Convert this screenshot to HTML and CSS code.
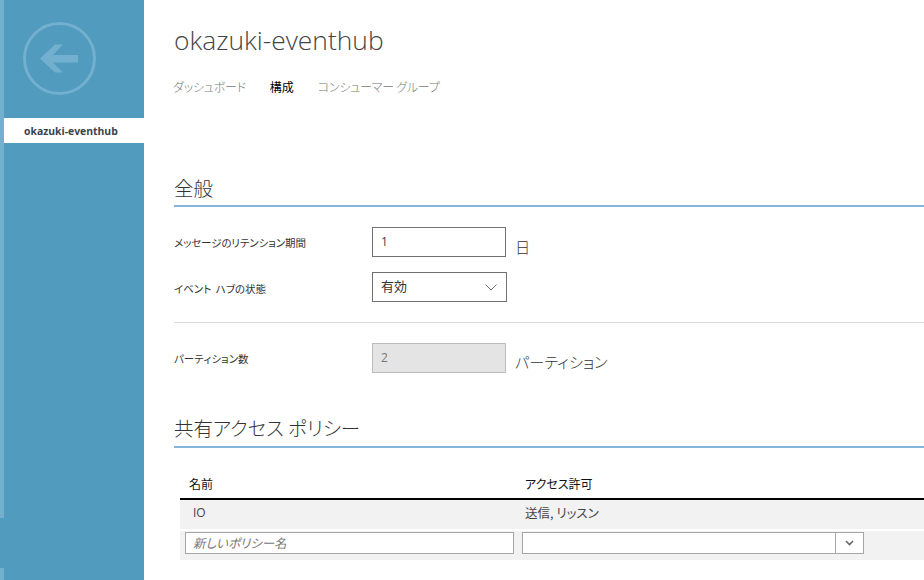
FILE: index.html
```html
<!DOCTYPE html>
<html lang="ja">
<head>
<meta charset="utf-8">
<title>okazuki-eventhub</title>
<link rel="stylesheet" href="styles.css">
</head>
<body>
<div class="app">
  <aside class="side">
    <div class="strip"></div>
    <div class="side-main">
      <div class="back">
        <svg class="back-icon" width="74" height="74" viewBox="0 0 74 74" fill="none">
          <circle cx="36.5" cy="36.5" r="35" stroke="#73afcf" stroke-width="3"/>
          <path d="M17 36.500 32 22.500H40L30 33H55V40.500H30L40 50.500H32Z" fill="#73afcf"/>
        </svg>
      </div>
      <div class="side-item">okazuki-eventhub</div>
    </div>
  </aside>
  <main class="main">
    <h1 class="title">okazuki-eventhub</h1>
    <nav class="tabs">
      <span class="tab">ダッシュボード</span>
      <span class="tab active">構成</span>
      <span class="tab">コンシューマー グループ</span>
    </nav>
    <h2 class="section first">全般</h2>
    <div class="row r1">
      <label class="lbl">メッセージのリテンション期間</label>
      <div class="input">1</div>
      <span class="unit day">日</span>
    </div>
    <div class="row r2">
      <label class="lbl">イベント ハブの状態</label>
      <div class="select"><span class="select-value">有効</span>
        <svg class="chev" width="12" height="7" viewBox="0 0 12 7" fill="none"><path d="M.5.5 6 6 11.500.5" stroke="#6d6d6d"/></svg>
      </div>
    </div>
    <hr class="rule">
    <div class="row r3">
      <label class="lbl">パーティション数</label>
      <div class="input disabled">2</div>
      <span class="unit">パーティション</span>
    </div>
    <h2 class="section second">共有アクセス ポリシー</h2>
    <div class="table">
      <div class="thead">
        <span class="col-a">名前</span>
        <span class="col-b">アクセス許可</span>
      </div>
      <div class="tr">
        <span class="cell-a">IO</span>
        <span class="cell-b">送信, リッスン</span>
      </div>
      <div class="tr-new">
        <div class="new-name">新しいポリシー名</div>
        <div class="combo">
          <div class="combo-btn">
            <svg width="9" height="6" viewBox="0 0 9 6" fill="none"><path d="M1 1 4.500 4.500 8 1" stroke="#666" stroke-width="1.600"/></svg>
          </div>
        </div>
      </div>
    </div>
  </main>
</div>
</body>
</html>
```
FILE: styles.css
```css
* { box-sizing: border-box; }
html, body { margin: 0; height: 100%; overflow: hidden; background: #fff; }
body { font-family: "Noto Sans CJK JP", "Open Sans", sans-serif; color: #333; font-feature-settings: "palt"; }
.app { display: flex; width: 924px; height: 580px; overflow: hidden; }

.side { width: 144px; flex: none; display: flex; background: #519bbe; }
.strip { width: 4px; height: 518px; background: #73afcf; flex: none; }
.side-main { flex: 1; position: relative; }
.side-main::before { content: ""; position: absolute; left: -4px; top: 568px; width: 4px; height: 12px; background: #73afcf; }
.back { height: 118px; padding: 22px 0 0 19px; }
.back-icon { display: block; }
.side-item { height: 25px; background: #fff; color: #3c4350; font: 700 10.4px/26px "Open Sans", sans-serif; padding-left: 20px; }

.main { flex: 1; min-width: 0; padding-left: 30px; }
.title { margin: 0; padding-top: 22px; height: 60px; font: 300 26.4px/36px "Open Sans", sans-serif; color: #444; }
.tabs { display: flex; gap: 24px; margin: 17px 0 0 -1px; height: 20px; font-size: 12px; line-height: 20px; font-weight: 300; color: #777; letter-spacing: -.25px; }
.tab.active { color: #000; font-weight: 400; letter-spacing: 0; }

.section { margin: 0; font-size: 19.5px; font-weight: 300; line-height: 28px; color: #333; border-bottom: 2px solid #85b5dc; }
.section.first { margin-top: 77px; height: 33px; }
.section.second { margin-top: 41px; height: 34px; }

.row { display: flex; align-items: center; }
.lbl { width: 198px; flex: none; font-size: 10.5px; font-weight: 400; color: #333; }
.r1 { margin-top: 20px; height: 30px; }
.r1 .lbl { letter-spacing: -.1px; }
.r2 { margin-top: 15px; height: 30px; }
.r2 .lbl { position: relative; top: 1px; word-spacing: 2px; }
.r3 { margin-top: 20px; height: 30px; }
.input { width: 134px; height: 30px; border: 1px solid #707070; padding-left: 8px; font: 400 12px/28px "Open Sans", sans-serif; color: #444; }
.input.disabled { background: #e4e4e4; border-color: #bcbcbc; color: #777; }
.unit { margin-left: 9px; font-size: 15.2px; font-weight: 300; color: #333; position: relative; top: 3px; }
.unit.day { top: 4px; }
.select { width: 135px; height: 30px; border: 1px solid #707070; padding: 0 9px 2px 8px; font-size: 13px; line-height: 26px; color: #333; display: flex; justify-content: space-between; align-items: center; }
.chev { display: block; margin-top: 2px; }
.rule { margin: 20px 0 0; border: 0; border-top: 1px solid #dcdcdc; }

.table { margin-left: 6px; margin-top: 25px; }
.thead { display: flex; height: 27px; border-bottom: 2px solid #000; font-size: 12px; line-height: 22px; color: #111; }
.col-a { width: 345px; padding-left: 9px; }
.tr { display: flex; height: 29px; background: #f2f2f2; font-size: 12.500px; line-height: 25px; color: #444; }
.cell-a { width: 345px; padding-left: 13px; font-family: "Open Sans", sans-serif; font-size: 12px; }
.tr-new { display: flex; height: 29px; margin-top: 2px; padding-left: 5px; background: #f2f2f2; align-items: flex-start; padding-top: 1px; }
.new-name { width: 329px; height: 22px; margin-right: 8px; background: #fff; border: 1px solid #a6a6a6; padding-left: 7px; font-size: 12.5px; font-style: italic; line-height: 20px; color: #777; }
.combo { width: 342px; height: 22px; background: #fff; border: 1px solid #a6a6a6; display: flex; justify-content: flex-end; }
.combo-btn { width: 28px; border-left: 1px solid #a6a6a6; display: flex; align-items: center; justify-content: center; }
```
